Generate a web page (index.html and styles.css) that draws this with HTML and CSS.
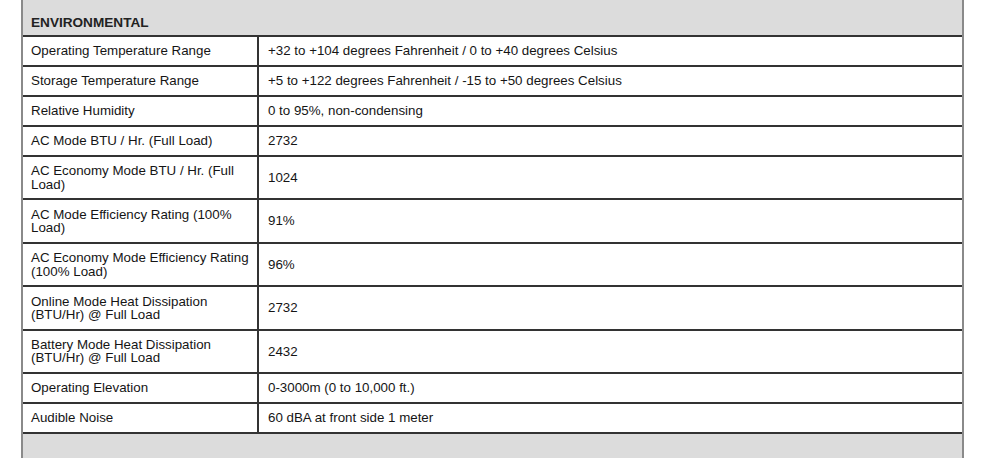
FILE: index.html
```html
<!DOCTYPE html>
<html lang="en">
<head>
<meta charset="utf-8">
<title>Environmental Specifications</title>
<link rel="stylesheet" href="styles.css">
</head>
<body>
<div class="spec">
  <table class="spec-table">
    <colgroup>
      <col class="col-label">
      <col class="col-value">
    </colgroup>
    <thead>
      <tr><th colspan="2">ENVIRONMENTAL</th></tr>
    </thead>
    <tbody>
      <tr><td>Operating Temperature Range</td><td>+32 to +104 degrees Fahrenheit / 0 to +40 degrees Celsius</td></tr>
      <tr><td>Storage Temperature Range</td><td>+5 to +122 degrees Fahrenheit / -15 to +50 degrees Celsius</td></tr>
      <tr><td>Relative Humidity</td><td>0 to 95%, non-condensing</td></tr>
      <tr><td>AC Mode BTU / Hr. (Full Load)</td><td>2732</td></tr>
      <tr><td>AC Economy Mode BTU / Hr. (Full Load)</td><td>1024</td></tr>
      <tr><td>AC Mode Efficiency Rating (100% Load)</td><td>91%</td></tr>
      <tr><td>AC Economy Mode Efficiency Rating (100% Load)</td><td>96%</td></tr>
      <tr><td>Online Mode Heat Dissipation (BTU/Hr) @ Full Load</td><td>2732</td></tr>
      <tr><td>Battery Mode Heat Dissipation (BTU/Hr) @ Full Load</td><td>2432</td></tr>
      <tr><td>Operating Elevation</td><td>0-3000m (0 to 10,000 ft.)</td></tr>
      <tr><td>Audible Noise</td><td>60 dBA at front side 1 meter</td></tr>
    </tbody>
  </table>
</div>
</body>
</html>
```

FILE: styles.css
```css
html, body {
  margin: 0;
  padding: 0;
  background: #ffffff;
}

body {
  font-family: "Liberation Sans", Arial, sans-serif;
  font-size: 13.33px;
  color: #151515;
}

.spec {
  box-sizing: border-box;
  margin-left: 21px;
  width: 943px;
  border-left: 2px solid #8a8a8a;
  border-right: 2px solid #8a8a8a;
  background: #dcdcdc;
  padding: 7px 0 40px;
}

.spec-table {
  width: 100%;
  border-collapse: collapse;
  table-layout: fixed;
}

.col-label {
  width: 235px;
}

.spec-table th {
  text-align: left;
  font-weight: bold;
  font-size: 13.6px;
  color: #222222;
  line-height: 13.4px;
  padding: 9.3px 8px 5.3px;
  border-bottom: 2px solid #333333;
}

.spec-table td {
  background: #ffffff;
  line-height: 13.4px;
  padding: 7.3px 8px;
  vertical-align: middle;
  border-top: 2px solid #333333;
  border-bottom: 2px solid #333333;
}

.spec-table td:first-child {
  border-right: 2px solid #333333;
  padding-right: 6px;
}

.spec-table td:last-child {
  padding-left: 9px;
}
```
